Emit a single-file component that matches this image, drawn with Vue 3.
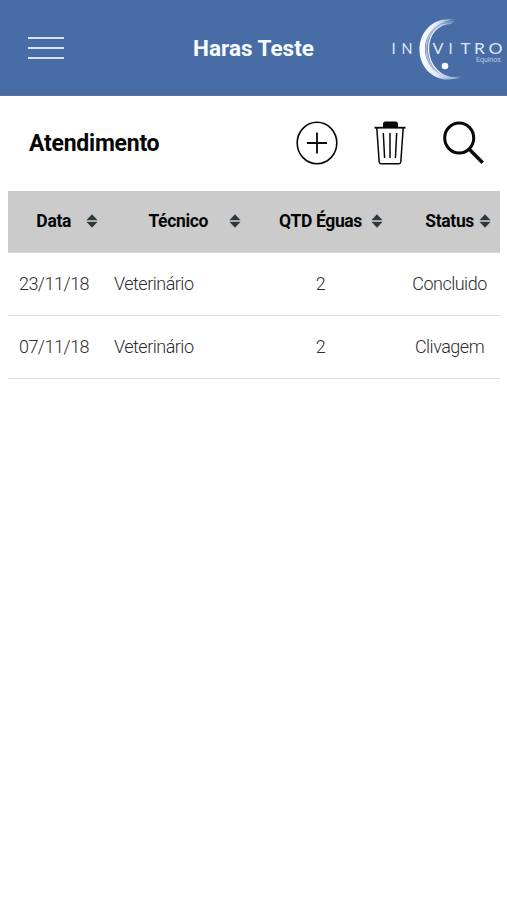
<template>
  <div class="app">
    <!-- Top bar -->
    <header class="topbar">
      <button class="menu" aria-label="Menu">
        <span></span>
        <span></span>
        <span></span>
      </button>
      <h1 class="farm-name">Haras Teste</h1>
      <svg class="logo" viewBox="0 0 127 96" role="img" aria-label="In Vitro Equinos">
        <defs>
          <linearGradient id="moon" x1="0" x2="1" y1="0" y2="0">
            <stop offset="0" stop-color="#fff" />
            <stop offset="0.4" stop-color="#dde9f9" />
            <stop offset="1" stop-color="#b7cbe8" stop-opacity="0.2" />
          </linearGradient>
        </defs>
        <path class="moon-outer" d="M75 19.800C55 16 39.500 30 39.500 50C39.500 71 60 87 83 76C63 82 45 68 45 49C45 33 58 20.500 75 19.800Z" />
        <path class="moon-mid" d="M74 21.500C57 21 46.300 34 46.300 49C46.300 67 62 80 80 77.500" />
        <path class="moon-inner" d="M72 23.300C58 23 48.500 34 48.500 49C48.500 66 62 79 77 78" />
        <circle class="moon-dot" cx="65" cy="66" r="3.300" />
        <g class="logo-name">
          <text x="11.500" y="54">I</text>
          <text x="21.500" y="54" textLength="11" lengthAdjust="spacingAndGlyphs">N</text>
          <text x="52.500" y="54" textLength="11" lengthAdjust="spacingAndGlyphs">V</text>
          <text x="68.500" y="54">I</text>
          <text x="80.500" y="54" textLength="10" lengthAdjust="spacingAndGlyphs">T</text>
          <text x="94" y="54" textLength="11" lengthAdjust="spacingAndGlyphs">R</text>
          <text x="108.500" y="54" textLength="14" lengthAdjust="spacingAndGlyphs">O</text>
        </g>
        <text class="logo-sub" x="96" y="62">Equinos</text>
      </svg>
    </header>

    <!-- Page title and actions -->
    <section class="toolbar">
      <h2 class="page-title">Atendimento</h2>
      <div class="actions">
        <button aria-label="Adicionar">
          <svg width="42" height="44" viewBox="0 0 42 44" class="icon">
            <ellipse cx="21" cy="22" rx="19.800" ry="20.700" stroke-width="1.600" />
            <path d="M21 11.500V32.500M11 22H31" stroke-width="1.800" />
          </svg>
        </button>
        <button aria-label="Excluir">
          <svg width="32" height="44" viewBox="0 0 32 44" class="icon">
            <path class="solid" d="M9.500 6V2.500Q9.500 1 11 1H22Q23.500 1 23.500 2.500V6Z" />
            <path d="M0.500 6.700H31.500" stroke-width="1.800" />
            <path d="M2.800 7L5.200 41Q5.400 42.700 7 42.700H25Q26.600 42.700 26.800 41L29.200 7" stroke-width="1.500" />
            <path d="M9.300 12L10.600 37M16 12V37M22.700 12L21.400 37" stroke-width="1.500" />
          </svg>
        </button>
        <button aria-label="Pesquisar">
          <svg width="42" height="44" viewBox="0 0 42 44" class="icon">
            <ellipse cx="17.200" cy="17" rx="14.500" ry="15" stroke-width="3" />
            <path d="M27 28L40.700 41.800" stroke-width="3.400" />
          </svg>
        </button>
      </div>
    </section>

    <!-- Appointments table -->
    <main class="table">
      <div class="row head">
        <div v-for="col in columns" :key="col.key" class="th" :class="`th--${col.key}`">
          <span>{{ col.label }}</span>
          <svg class="sort" width="12" height="14" viewBox="0 0 12 14">
            <path d="M6 0.300L11.400 6H0.600Z" />
            <path d="M0.600 8H11.400L6 13.700Z" />
            <path class="sort-gap" d="M0.600 7H11.400" />
          </svg>
        </div>
      </div>
      <div v-for="item in items" :key="item.data" class="row">
        <div class="td">{{ item.data }}</div>
        <div class="td td--tecnico">{{ item.tecnico }}</div>
        <div class="td">{{ item.qtd }}</div>
        <div class="td td--status">{{ item.status }}</div>
      </div>
    </main>
  </div>
</template>

<script setup>
const columns = [
  { key: 'data', label: 'Data' },
  { key: 'tecnico', label: 'Técnico' },
  { key: 'qtd', label: 'QTD Éguas' },
  { key: 'status', label: 'Status' },
]

const items = [
  { data: '23/11/18', tecnico: 'Veterinário', qtd: 2, status: 'Concluido' },
  { data: '07/11/18', tecnico: 'Veterinário', qtd: 2, status: 'Clivagem' },
]
</script>

<style>
body {
  margin: 0;
  background: #fff;
}
</style>

<style scoped>
.app {
  min-height: 900px;
  background: #fff;
  color: #060606;
  font-family: Roboto, "Liberation Sans", sans-serif;
}

button {
  display: block;
  padding: 0;
  border: 0;
  background: none;
}

.topbar {
  display: grid;
  grid-template-columns: 127px 1fr 127px;
  align-items: center;
  height: 96px;
  box-sizing: border-box;
  border-bottom: 1px solid #58709b;
  background: #486ca6;
}

.menu {
  display: flex;
  flex-direction: column;
  gap: 8px;
  width: 36px;
  margin-left: 28.4px;
}

.menu span {
  height: 2px;
  background: #d5e6fb;
}

.farm-name {
  margin: 0;
  color: #f8fcff;
  font-size: 22.5px;
  font-weight: 700;
  text-align: center;
}

.logo {
  width: 127px;
  height: 96px;
}

.moon-outer {
  fill: url(#moon);
}

.moon-mid,
.moon-inner {
  fill: none;
  stroke: url(#moon);
  stroke-width: 1.2;
}

.moon-mid {
  stroke-width: 2;
  opacity: 0.55;
}

.moon-dot {
  fill: #fff;
}

.logo-name {
  fill: #dde8f7;
  font-family: Lato, sans-serif;
  font-size: 15px;
}

.logo-sub {
  fill: #b9cbe6;
  font-size: 7px;
}

.toolbar {
  display: flex;
  align-items: center;
  justify-content: space-between;
  height: 95px;
  box-sizing: border-box;
  padding: 0 23px 1px 29px;
}

.page-title {
  margin: 0;
  padding-top: 1px;
  font-size: 23px;
  font-weight: 700;
  letter-spacing: -0.25px;
}

.actions {
  display: flex;
  gap: 36px;
}

.icon {
  display: block;
  fill: none;
  stroke: #080808;
}

.icon .solid {
  fill: #080808;
}

.table {
  margin: 0 7px 0 8px;
}

.row {
  display: grid;
  grid-template-columns: 92px 156px 129px 115px;
  align-items: center;
  height: 63px;
  box-sizing: border-box;
  padding-bottom: 1px;
  border-bottom: 1.5px solid #dedede;
}

.head {
  height: 62px;
  border-bottom: 1px solid #d8d8d8;
  background: #cbcbcb;
}

.th {
  display: flex;
  align-items: center;
  justify-content: flex-end;
  font-size: 17.5px;
  font-weight: 700;
  letter-spacing: -0.35px;
  white-space: nowrap;
}

.th--data {
  gap: 15px;
  padding-right: 2px;
}

.th--tecnico {
  gap: 21px;
  padding-right: 15px;
}

.th--qtd {
  gap: 9px;
  padding-right: 2px;
}

.th--status {
  gap: 5px;
  padding-right: 9px;
}

.sort {
  flex: none;
  fill: #30373b;
}

.sort-gap {
  stroke: #8b8f91;
  stroke-width: 1;
}

.td {
  color: #2c2c2c;
  font-size: 18px;
  font-weight: 300;
  letter-spacing: -0.5px;
  text-align: center;
}

.td--tecnico {
  padding-left: 14px;
  text-align: left;
}

.td--status {
  padding-left: 14px;
}
</style>
